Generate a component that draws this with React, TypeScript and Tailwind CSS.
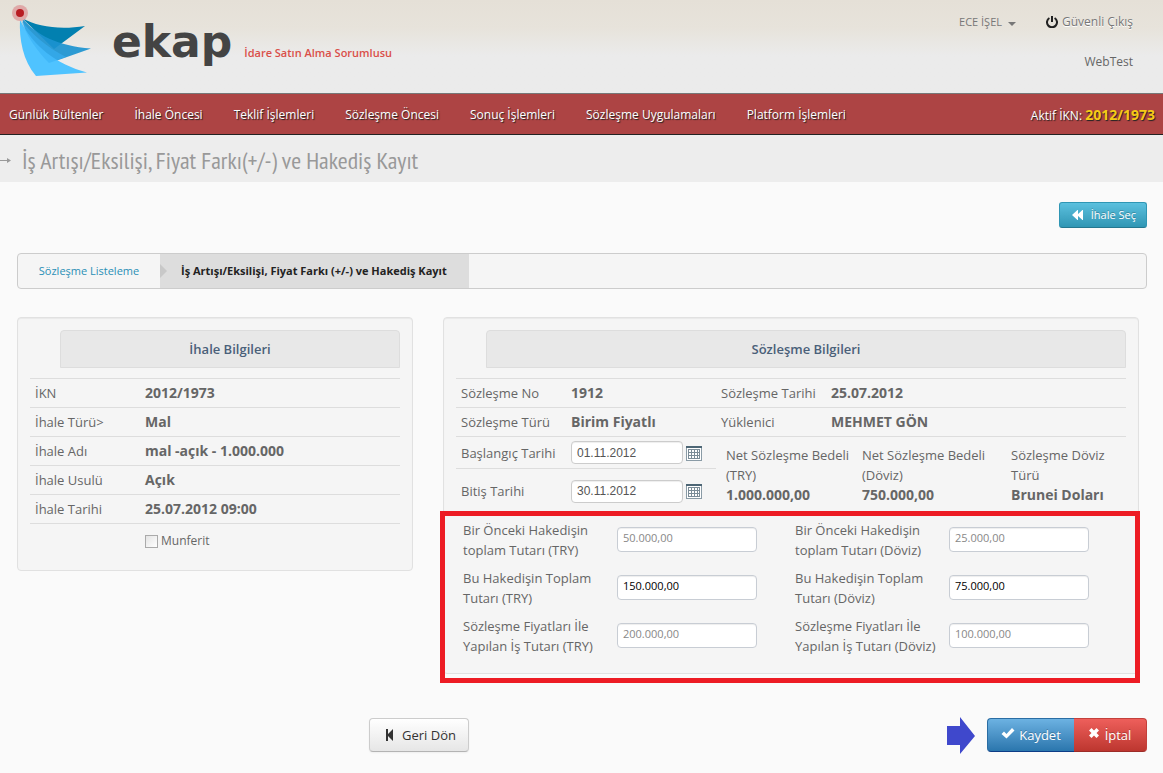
import type { ReactNode } from "react";

const menu = [
  "Günlük Bültenler",
  "İhale Öncesi",
  "Teklif İşlemleri",
  "Sözleşme Öncesi",
  "Sonuç İşlemleri",
  "Sözleşme Uygulamaları",
  "Platform İşlemleri",
];

const tender = [
  ["İKN", "2012/1973"],
  ["İhale Türü>", "Mal"],
  ["İhale Adı", "mal -açık - 1.000.000"],
  ["İhale Usulü", "Açık"],
  ["İhale Tarihi", "25.07.2012 09:00"],
];

const contract = [
  ["Sözleşme No", "1912", "Sözleşme Tarihi", "25.07.2012"],
  ["Sözleşme Türü", "Birim Fiyatlı", "Yüklenici", "MEHMET GÖN"],
];

const amounts = [
  { id: "prev-try", lines: ["Bir Önceki Hakedişin", "toplam Tutarı (TRY)"], value: "50.000,00", editable: false },
  { id: "prev-fx", lines: ["Bir Önceki Hakedişin", "toplam Tutarı (Döviz)"], value: "25.000,00", editable: false },
  { id: "cur-try", lines: ["Bu Hakedişin Toplam", "Tutarı (TRY)"], value: "150.000,00", editable: true },
  { id: "cur-fx", lines: ["Bu Hakedişin Toplam", "Tutarı (Döviz)"], value: "75.000,00", editable: true },
  { id: "work-try", lines: ["Sözleşme Fiyatları İle", "Yapılan İş Tutarı (TRY)"], value: "200.000,00", editable: false },
  { id: "work-fx", lines: ["Sözleşme Fiyatları İle", "Yapılan İş Tutarı (Döviz)"], value: "100.000,00", editable: false },
];

function BirdMark() {
  return (
    <svg className="h-[76px] w-[84px] shrink-0" viewBox="0 0 84 76" aria-hidden="true">
      <path d="M14 13C30 22 52 25 77 21L46 44Z" fill="#0280b0" />
      <path d="M14 13C28 30 50 41 83 43.500L42 58C28 46 17 30 14 13Z" fill="#1b93d0" fillOpacity="0.92" />
      <path d="M12 15C26 42 48 59 79 67.500L28 71C15 56 11 34 12 15Z" fill="#4fc3ff" />
      <path d="M13 15C19 32 30 47 41 58L58 52C38 42 24 29 13 15Z" fill="#38b0f5" fillOpacity="0.6" />
      <circle cx="12" cy="8" r="8" fill="#dfa9a8" />
      <circle cx="12" cy="8" r="4" fill="#b81c22" />
    </svg>
  );
}

function PowerIcon() {
  return (
    <svg className="h-3 w-3" viewBox="0 0 12 12" fill="none" stroke="#222" strokeWidth="2" aria-hidden="true">
      <path d="M3.4 2A5 5 0 1 0 8.6 2M6 0V6" />
    </svg>
  );
}

function CalendarIcon() {
  return (
    <svg className="h-4 w-4" viewBox="0 0 16 16" aria-hidden="true">
      <rect x="0.5" y="1.5" width="15" height="14" fill="#fff" stroke="#8a9ba6" />
      <path d="M0 2H16" stroke="#4d6675" strokeWidth="2" />
      <rect x="2" y="4" width="12" height="10" fill="#7b8c97" />
      <path
        d="M3 5H5V7H3ZM6 5H8V7H6ZM9 5H11V7H9ZM12 5H13V7H12ZM3 8H5V10H3ZM6 8H8V10H6ZM9 8H11V10H9ZM12 8H13V10H12ZM3 11H5V13H3ZM6 11H8V13H6ZM9 11H11V13H9ZM12 11H13V13H12Z"
        fill="#fff"
      />
    </svg>
  );
}

function Panel({ title, className, children }: { title: string; className: string; children: ReactNode }) {
  return (
    <section
      className={`rounded border border-[#e1e1e1] bg-[#f5f5f5] p-3 shadow-[inset_0_1px_1px_rgba(0,0,0,0.05)] ${className}`}
    >
      <h2 className="mb-2.5 ml-[30px] rounded-t border border-[#ddd] bg-[#e8e8e8] py-2 text-center text-[13px] leading-5 font-semibold text-[#4a6079]">
        {title}
      </h2>
      {children}
    </section>
  );
}

function DateField({ id, label, value }: { id: string; label: string; value: string }) {
  return (
    <>
      <label htmlFor={id} className="w-[110px] shrink-0">
        {label}
      </label>
      <input
        id={id}
        defaultValue={value}
        className="h-[23px] w-28 rounded border border-[#ccc] bg-white px-[5px] font-['Liberation_Sans',sans-serif] text-xs text-[#555] shadow-[inset_0_1px_1px_rgba(0,0,0,0.07)]"
      />
      <button type="button" aria-label={`${label} seç`} className="ml-[3px]">
        <CalendarIcon />
      </button>
    </>
  );
}

export default function App() {
  return (
    <div className="min-h-screen bg-[#fafafa] font-['Open_Sans','Noto_Sans',sans-serif] text-[13px] leading-5 text-[#666]">
      <header className="flex h-[93px] items-start justify-between bg-linear-to-b from-[#e5e0d7] via-[#e7e3db] via-30% to-[#ebebeb] to-60%">
        <div className="flex items-start pt-[5px] pl-2">
          <BirdMark />
          <div className="flex items-baseline pt-3 pl-5">
            <span className="font-['DejaVu_Sans',sans-serif] text-[44px] leading-[50px] font-bold text-[#444]">ekap</span>
            <span className="pl-3 text-[11px] font-semibold text-[#da4f49]">İdare Satın Alma Sorumlusu</span>
          </div>
        </div>
        <div className="flex flex-col items-end pt-3 pr-[30px] text-xs leading-5 text-[#777]">
          <div className="flex items-center gap-[30px] [text-shadow:0_1px_0_#fff]">
            <button type="button" className="flex items-center gap-1.5 text-[11px]">
              ECE İŞEL
              <svg className="mt-1 h-1 w-2" viewBox="0 0 8 4" aria-hidden="true">
                <path d="M0 0H8L4 4Z" fill="#777" />
              </svg>
            </button>
            <a href="#cikis" className="flex items-center gap-1">
              <PowerIcon />
              Güvenli Çıkış
            </a>
          </div>
          <span className="mt-5 text-[#666]">WebTest</span>
        </div>
      </header>

      <nav className="flex h-[42px] items-center justify-between border-t border-b border-t-[#777] border-b-[#222] bg-[#ad4444] pt-0.5 pr-2 pl-[9px] text-xs text-white [text-shadow:1px_1px_1px_#222]">
        <ul className="flex gap-[31px]">
          {menu.map((item) => (
            <li key={item}>
              <a href="#menu">{item}</a>
            </li>
          ))}
        </ul>
        <span>
          Aktif İKN: <b className="text-sm text-[#f5cb16]">2012/1973</b>
        </span>
      </nav>

      <div className="flex h-[47px] items-center bg-[#ededed] pt-1">
        <svg className="h-[7px] w-[11px]" viewBox="0 0 11 7" aria-hidden="true">
          <path d="M0 3H8V4H0Z M7 1L11 3.5L7 6Z" fill="#999" />
        </svg>
        <h1 className="pl-[11px] font-['PT_Sans_Narrow','Open_Sans_Condensed','Roboto_Condensed',Lato,sans-serif] text-2xl leading-7 text-[#999]">
          İş Artışı/Eksilişi, Fiyat Farkı(+/-) ve Hakediş Kayıt
        </h1>
      </div>

      <main className="pt-5 pr-4 pl-[17px]">
        <div className="flex justify-end">
          <button
            type="button"
            className="flex h-[26px] items-center gap-[6px] rounded-[3px] border border-[#2f96b4] border-b-[#24778f] bg-linear-to-b from-[#5bc0de] to-[#2f96b4] pr-2.5 pl-[11px] text-[11px] text-white [text-shadow:0_-1px_0_rgba(0,0,0,0.25)]"
          >
            <svg className="h-2.5 w-3.5" viewBox="0 0 14 10" aria-hidden="true">
              <path d="M1 5L7 -0.500V10.500ZM6 5L12 -0.500V10.500Z" fill="#fff" />
            </svg>
            İhale Seç
          </button>
        </div>

        <nav aria-label="Konum" className="mt-[25px] flex h-9 items-stretch overflow-hidden rounded border border-[#ccc] bg-[#f5f5f5]">
          <a href="#liste" className="flex w-[142px] items-center justify-center text-[11px] text-[#2a8fb5]">
            Sözleşme Listeleme
          </a>
          <span className="flex items-center bg-[#ddd]">
            <svg className="h-3.5 w-[7px]" viewBox="0 0 7 14" aria-hidden="true">
              <path d="M0 0L7 7L0 14Z" fill="#c8c8c8" />
            </svg>
            <b className="pr-[22px] pl-3.5 text-[11px] text-[#222]">
              İş Artışı/Eksilişi, Fiyat Farkı (+/-) ve Hakediş Kayıt
            </b>
          </span>
        </nav>

        <div className="mt-7 flex items-start gap-[30px] pr-2">
          <Panel title="İhale Bilgileri" className="w-[396px] shrink-0 pb-[19px]">
            <table className="w-full border-b border-[#ddd] text-left">
              <tbody>
                {tender.map(([label, value]) => (
                  <tr key={label} className="border-t border-[#ddd]">
                    <th className="w-[115px] py-1 pl-[5px] font-normal">{label}</th>
                    <td className="py-1 text-sm leading-5 font-bold">{value}</td>
                  </tr>
                ))}
              </tbody>
            </table>
            <label className="mt-[7px] ml-[115px] flex items-center gap-[3px] text-xs leading-5">
              <input
                type="checkbox"
                className="h-[13px] w-[13px] appearance-none border border-[#aaa] bg-linear-to-br from-[#e4e4e4] to-white"
              />
              Munferit
            </label>
          </Panel>

          <Panel title="Sözleşme Bilgileri" className="relative min-w-0 flex-1 pb-[17px]">
            <table className="w-full table-fixed border-b border-[#ddd] text-left">
              <tbody>
                {contract.map(([l1, v1, l2, v2]) => (
                  <tr key={l1} className="border-t border-[#ddd]">
                    <th className="w-[115px] py-1 pl-[5px] font-normal">{l1}</th>
                    <td className="w-[150px] py-1 text-sm leading-5 font-bold">{v1}</td>
                    <th className="w-[110px] py-1 font-normal">{l2}</th>
                    <td className="py-1 text-sm leading-5 font-bold">{v2}</td>
                  </tr>
                ))}
              </tbody>
            </table>

            <div className="flex">
              <div className="w-[260px] shrink-0">
                <div className="flex h-8 items-center border-b border-[#ddd] pl-[5px]">
                  <DateField id="start-date" label="Başlangıç Tarihi" value="01.11.2012" />
                </div>
                <div className="flex h-11 items-center pl-[5px]">
                  <DateField id="end-date" label="Bitiş Tarihi" value="30.11.2012" />
                </div>
              </div>
              <dl className="flex pt-2 pl-2.5">
                <div className="w-[136px]">
                  <dt>
                    Net Sözleşme Bedeli
                    <br />
                    (TRY)
                  </dt>
                  <dd className="text-sm leading-5 font-bold">1.000.000,00</dd>
                </div>
                <div className="w-[149px]">
                  <dt>
                    Net Sözleşme Bedeli
                    <br />
                    (Döviz)
                  </dt>
                  <dd className="text-sm leading-5 font-bold">750.000,00</dd>
                </div>
                <div>
                  <dt>
                    Sözleşme Döviz
                    <br />
                    Türü
                  </dt>
                  <dd className="text-sm leading-5 font-bold">Brunei Doları</dd>
                </div>
              </dl>
            </div>

            <div className="mt-[7px] grid grid-cols-[332px_1fr] gap-y-2 pl-[7px]">
              {amounts.map(({ id, lines, value, editable }) => (
                <div key={id} className="flex items-start">
                  <label htmlFor={id} className="w-[154px] shrink-0 whitespace-nowrap">
                    {lines[0]}
                    <br />
                    {lines[1]}
                  </label>
                  <input
                    id={id}
                    defaultValue={value}
                    readOnly={!editable}
                    className="mt-[7px] h-[25px] w-[140px] rounded border border-[#c8cdd4] bg-white px-[5px] pb-1 text-[11px] text-black shadow-[inset_0_1px_1px_rgba(0,0,0,0.07)] read-only:text-[#888]"
                  />
                </div>
              ))}
            </div>

            <div className="pointer-events-none absolute top-[193px] -right-0.5 -bottom-2.5 -left-1 border-[5px] border-[#ed1c24]" />
          </Panel>
        </div>

        <div className="mt-[42px] flex items-center justify-between pb-4">
          <button
            type="button"
            className="ml-[352px] flex h-[34px] items-center gap-2 rounded border border-[#ccc] border-b-[#b3b3b3] bg-linear-to-b from-white to-[#e6e6e6] pr-3 pl-3.5 text-[13px] text-[#333] shadow-[0_1px_2px_rgba(0,0,0,0.05)]"
          >
            <svg className="h-3 w-2.5" viewBox="0 0 10 12" aria-hidden="true">
              <path d="M2 0H4V5L9 0V12L4 7V12H2Z" fill="#333" />
            </svg>
            Geri Dön
          </button>
          <div className="flex items-center">
            <svg className="mr-3 h-[38px] w-7" viewBox="0 0 28 38" aria-hidden="true">
              <path d="M0 10H13V1L28 20L13 38V29H0Z" fill="#3f48cc" />
            </svg>
            <button
              type="button"
              className="flex h-[34px] w-[87px] items-center justify-center gap-1 rounded-l border border-r-0 border-[#2a6da3] border-b-[#0d3c86] bg-linear-to-b from-[#6cb2e2] to-[#2a76ad] text-[13px] text-white [text-shadow:0_-1px_0_rgba(0,0,0,0.25)]"
            >
              <svg className="mb-1 h-3 w-3.5" viewBox="0 0 14 12" aria-hidden="true">
                <path d="M0.5 7L3 4.5L5.5 7L11 1L13.5 3.5L5.5 11.5Z" fill="#fff" />
              </svg>
              Kaydet
            </button>
            <button
              type="button"
              className="flex h-[34px] w-[73px] items-center justify-center gap-1.5 rounded-r border border-l-0 border-[#c4403b] border-b-[#9c2c27] bg-linear-to-b from-[#ee5f5b] to-[#bd362f] text-[13px] text-white [text-shadow:0_-1px_0_rgba(0,0,0,0.25)]"
            >
              <svg className="mb-1 h-2.5 w-2.5" viewBox="0 0 10 10" aria-hidden="true">
                <path d="M0 2.5L2.5 0L5 2.5L7.5 0L10 2.5L7.5 5L10 7.5L7.5 10L5 7.5L2.5 10L0 7.5L2.5 5Z" fill="#fff" />
              </svg>
              İptal
            </button>
          </div>
        </div>
      </main>
    </div>
  );
}
